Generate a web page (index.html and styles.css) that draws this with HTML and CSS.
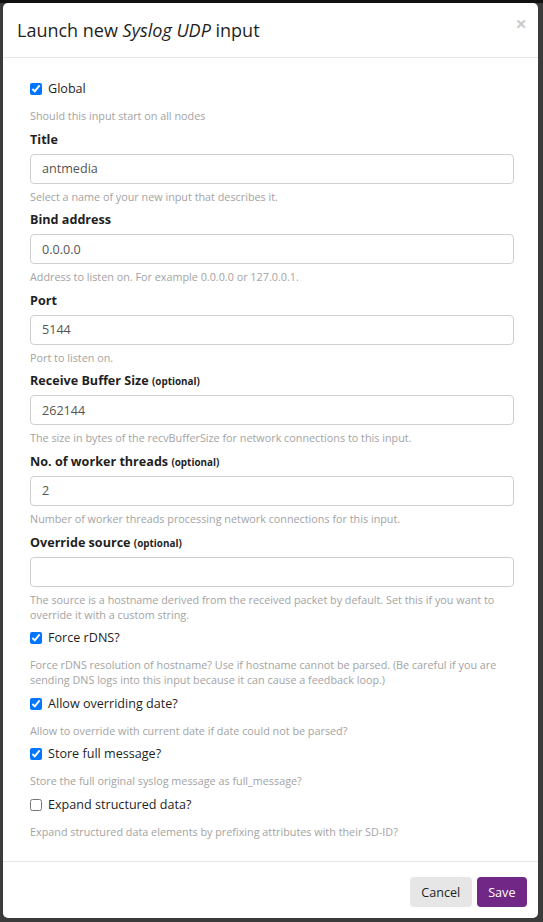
FILE: index.html
```html
<!DOCTYPE html>
<html lang="en">
<head>
<meta charset="utf-8">
<title>Launch new Syslog UDP input</title>
<link rel="stylesheet" href="styles.css">
</head>
<body>
<div class="modal">
  <div class="modal-header">
    <h4 class="modal-title">Launch new <em>Syslog UDP</em> input</h4>
    <button class="close" type="button">×</button>
  </div>
  <div class="modal-body">
    <div class="group check-group">
      <label class="check"><input type="checkbox" checked> Global</label>
      <p class="help">Should this input start on all nodes</p>
    </div>
    <div class="group">
      <label class="lbl">Title</label>
      <input class="field" type="text" value="antmedia">
      <p class="help">Select a name of your new input that describes it.</p>
    </div>
    <div class="group">
      <label class="lbl">Bind address</label>
      <input class="field" type="text" value="0.0.0.0">
      <p class="help">Address to listen on. For example 0.0.0.0 or 127.0.0.1.</p>
    </div>
    <div class="group">
      <label class="lbl">Port</label>
      <input class="field" type="text" value="5144">
      <p class="help">Port to listen on.</p>
    </div>
    <div class="group">
      <label class="lbl">Receive Buffer Size <small>(optional)</small></label>
      <input class="field" type="text" value="262144">
      <p class="help">The size in bytes of the recvBufferSize for network connections to this input.</p>
    </div>
    <div class="group">
      <label class="lbl">No. of worker threads <small>(optional)</small></label>
      <input class="field" type="text" value="2">
      <p class="help">Number of worker threads processing network connections for this input.</p>
    </div>
    <div class="group">
      <label class="lbl">Override source <small>(optional)</small></label>
      <input class="field" type="text" value="">
      <p class="help">The source is a hostname derived from the received packet by default. Set this if you want to override it with a custom string.</p>
    </div>
    <div class="group check-group">
      <label class="check"><input type="checkbox" checked> Force rDNS?</label>
      <p class="help">Force rDNS resolution of hostname? Use if hostname cannot be parsed. (Be careful if you are sending DNS logs into this input because it can cause a feedback loop.)</p>
    </div>
    <div class="group check-group">
      <label class="check"><input type="checkbox" checked> Allow overriding date?</label>
      <p class="help">Allow to override with current date if date could not be parsed?</p>
    </div>
    <div class="group check-group">
      <label class="check"><input type="checkbox" checked> Store full message?</label>
      <p class="help">Store the full original syslog message as full_message?</p>
    </div>
    <div class="group check-group">
      <label class="check"><input type="checkbox"> Expand structured data?</label>
      <p class="help">Expand structured data elements by prefixing attributes with their SD-ID?</p>
    </div>
  </div>
  <div class="modal-footer">
    <button class="btn btn-default" type="button">Cancel</button>
    <button class="btn btn-primary" type="button">Save</button>
  </div>
</div>
</body>
</html>
```
FILE: styles.css
```css
html {
  background: #3b3b3b;
}
body {
  margin: 0;
  padding: 3px 0 4px 3px;
  font-family: "Open Sans", "DejaVu Sans", sans-serif;
  font-size: 12.6px;
  color: #1f1f1f;
  background: linear-gradient(#111 0, #111 3px, #3b3b3b 3px);
}
.modal {
  width: 535px;
  height: 915px;
  background: #fff;
  border-radius: 5px;
  display: flex;
  flex-direction: column;
  overflow: hidden;
}
.modal-header {
  display: flex;
  justify-content: space-between;
  align-items: flex-start;
  padding: 15px 11px 15px 14px;
  border-bottom: 1px solid #e5e5e5;
}
.modal-title {
  margin: 0;
  font-size: 18px;
  line-height: 24px;
  font-weight: 400;
  color: #1f1f1f;
}
.modal-title em {
  font-style: italic;
}
.close {
  border: 0;
  background: none;
  padding: 0;
  margin-top: -4px;
  font-family: "Open Sans", sans-serif;
  font-size: 20px;
  font-weight: 700;
  line-height: 1;
  color: #000;
  opacity: 0.2;
}
.modal-body {
  flex: 1;
  padding: 21px 24px 0 27px;
}
.group {
  display: flex;
  flex-direction: column;
  margin-bottom: 6.6px;
}
.lbl {
  font-weight: 700;
  height: 20px;
  line-height: 20px;
  margin-bottom: 4px;
}
.lbl small {
  font-size: 9.9px;
  font-weight: 700;
  line-height: 1;
}
.field {
  height: 30px;
  box-sizing: border-box;
  border: 1px solid #cfcfcf;
  border-radius: 4px;
  padding: 0 11px;
  font-family: "Open Sans", sans-serif;
  font-size: 12.6px;
  color: #555;
  background: #fff;
}
.help {
  margin: 5px 0 0;
  font-size: 10.8px;
  line-height: 15px;
  color: #a3a3a3;
}
.check {
  display: flex;
  align-items: center;
  height: 20px;
  line-height: 20px;
}
.check input {
  width: 12px;
  height: 12px;
  margin: 0 6px 0 0;
}
.check-group .help {
  margin-top: 9px;
}
.modal-footer {
  display: flex;
  justify-content: flex-end;
  gap: 5px;
  padding: 15px 11px 11px;
  border-top: 1px solid #e5e5e5;
}
.btn {
  height: 30px;
  box-sizing: border-box;
  border: 0;
  border-radius: 4px;
  padding: 0 11.5px;
  font-family: "Open Sans", sans-serif;
  font-size: 12.6px;
}
.btn-default {
  background: #e6e6e6;
  color: #1f1f1f;
}
.btn-primary {
  background: #702785;
  color: #fff;
}
```
